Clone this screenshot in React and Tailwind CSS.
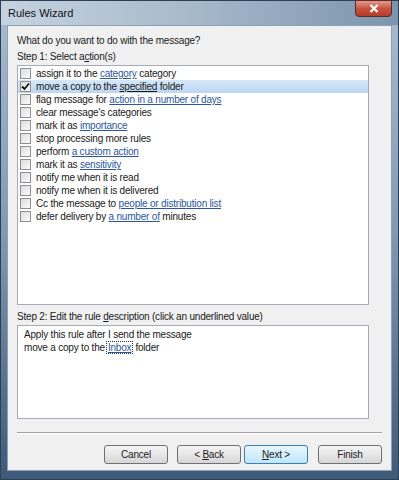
const actions = [
  [["assign it to the "], ["category", true], [" category"]],
  [["move a copy to the "], ["specified", true, "dark"], [" folder"]],
  [["flag message for "], ["action in a number of days", true]],
  [["clear message's categories"]],
  [["mark it as "], ["importance", true]],
  [["stop processing more rules"]],
  [["perform "], ["a custom action", true]],
  [["mark it as "], ["sensitivity", true]],
  [["notify me when it is read"]],
  [["notify me when it is delivered"]],
  [["Cc the message to "], ["people or distribution list", true]],
  [["defer delivery by "], ["a number of", true], [" minutes"]],
];

const Checkbox = ({ checked }) => (
  <span className="w-[11px] h-[11px] shrink-0 border border-[#8f8f8f] bg-gradient-to-br from-[#dcdcdc] to-[#fbfbfb] flex items-center justify-center">
    {checked && (
      <svg width="9" height="9" viewBox="0 0 9 9">
        <path d="M1 4.5 L3.5 7 L8 1.5" stroke="#111" strokeWidth="1.8" fill="none" />
      </svg>
    )}
  </span>
);

const Button = ({ children, primary }) => (
  <button
    className={
      primary
        ? "w-[64px] h-[19px] rounded-[3px] border border-[#3c7fb1] bg-gradient-to-b from-[#eaf6fd] to-[#bee6fd] text-[10px] text-[#222]"
        : "w-[64px] h-[19px] rounded-[3px] border border-[#707070] bg-gradient-to-b from-[#f3f3f3] via-[#e7e7e7] to-[#d5d5d5] text-[10px] text-[#222]"
    }
  >
    {children}
  </button>
);

const App = () => {
  return (
    <div
      className="w-[399px] h-[480px] flex flex-col border border-[#2c3f55] bg-gradient-to-b from-[#a9bdd1] via-[#7f98b2] to-[#3e5a78] text-[#1a1a1a] tracking-[-0.2px]"
      style={{ fontFamily: '"Liberation Sans", Arial, sans-serif' }}
    >
      <div className="h-[24px] flex items-start justify-between pl-[7px] pr-[6px] bg-gradient-to-r from-[#c6d3df] via-[#a5b8ca] to-[#7d94ad]">
        <span className="text-[11px] leading-[24px] text-[#111] tracking-normal">Rules Wizard</span>
        <span className="w-[37px] h-[17px] -mt-[1px] rounded-b-[4px] border border-[#5b2a2a] bg-gradient-to-b from-[#e29a8a] via-[#c7533f] to-[#b33b2a] flex items-center justify-center">
          <svg width="10" height="9" viewBox="0 0 10 9">
            <path d="M1.5 1 L8.5 8 M8.5 1 L1.5 8" stroke="#fff" strokeWidth="2.2" />
          </svg>
        </span>
      </div>

      <div className="mx-[6px] h-[446px] bg-[#f0f0f0] border border-[#8c9fb4] flex flex-col pl-[9px] pr-[9px] pt-[7px] text-[10px]">
        <div className="leading-[16px]">What do you want to do with the message?</div>
        <div className="leading-[16px]">
          Step 1: Select a<span className="underline">c</span>tion(s)
        </div>

        <div className="mr-[13px] h-[240px] bg-white border border-[#a5acb5] pt-[1px]">
          {actions.map((parts, i) => (
            <div
              key={i}
              className={
                i === 1
                  ? "h-[13px] flex items-center pl-[2px] bg-gradient-to-b from-[#d6e7f9] to-[#bcd7f2]"
                  : "h-[13px] flex items-center pl-[2px]"
              }
            >
              <Checkbox checked={i === 1} />
              <span className="ml-[5px] leading-[13px] whitespace-nowrap">
                {parts.map(([t, link, dark], j) =>
                  link ? (
                    <span key={j} className={dark ? "underline text-[#1a1a1a]" : "underline text-[#2a56a6]"}>
                      {t}
                    </span>
                  ) : (
                    <span key={j}>{t}</span>
                  )
                )}
              </span>
            </div>
          ))}
        </div>

        <div className="leading-[16px] mt-[4px]">
          Step 2: Edit the rule <span className="underline">d</span>escription (click an underlined value)
        </div>
        <div className="mr-[13px] h-[94px] bg-white border border-[#a5acb5] pl-[6px] pt-[2px] leading-[13px]">
          <div>Apply this rule after I send the message</div>
          <div className="flex items-center">
            <span>move a copy to the</span>
            <span className="ml-[1px] mr-[2px] px-[1px] border border-dotted border-[#333] leading-[11px] underline text-[#2a56a6]">
              Inbox
            </span>
            <span>folder</span>
          </div>
        </div>

        <div className="mt-[13px] h-[2px] border-t border-[#a0a0a0] border-b border-b-white" />

        <div className="mt-[11px] flex justify-end">
          <Button>Cancel</Button>
          <span className="w-[9px]" />
          <Button>
            &lt; <span className="underline">B</span>ack
          </Button>
          <span className="w-[3px]" />
          <Button primary>
            <span className="underline">N</span>ext &gt;
          </Button>
          <span className="w-[10px]" />
          <Button>Finish</Button>
        </div>
      </div>
    </div>
  );
};

export default App;
